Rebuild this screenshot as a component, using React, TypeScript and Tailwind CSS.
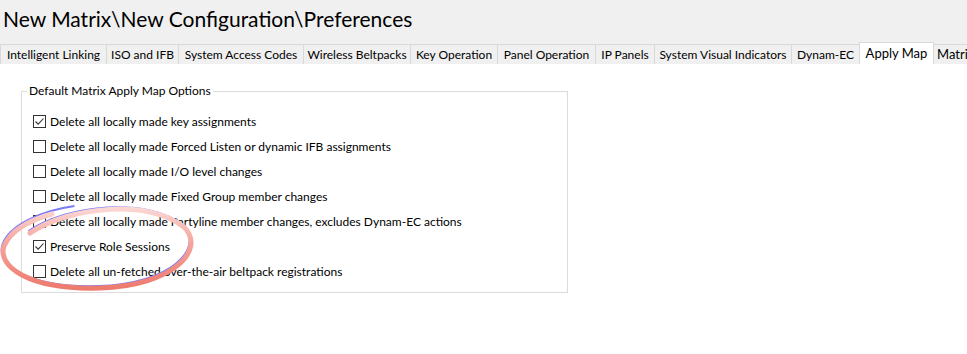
const tabs = [
  { label: "Intelligent Linking", w: "w-[107px]" },
  { label: "ISO and IFB", w: "w-[73px]" },
  { label: "System Access Codes", w: "w-[126px]" },
  { label: "Wireless Beltpacks", w: "w-[108px]" },
  { label: "Key Operation", w: "w-[88px]" },
  { label: "Panel Operation", w: "w-[99px]" },
  { label: "IP Panels", w: "w-[60px]" },
  { label: "System Visual Indicators", w: "w-[138px]" },
  { label: "Dynam-EC", w: "w-[69px]" },
];

const options = [
  { label: "Delete all locally made key assignments", checked: true },
  { label: "Delete all locally made Forced Listen or dynamic IFB assignments", checked: false },
  { label: "Delete all locally made I/O level changes", checked: false },
  { label: "Delete all locally made Fixed Group member changes", checked: false },
  { label: "Delete all locally made Partyline member changes, excludes Dynam-EC actions", checked: false },
  { label: "Preserve Role Sessions", checked: true },
  { label: "Delete all un-fetched over-the-air beltpack registrations", checked: false },
];

function CheckBox({ checked }: { checked: boolean }) {
  return (
    <span className="flex h-[13px] w-[13px] shrink-0 items-center justify-center border border-[#333333] bg-white">
      {checked && (
        <svg width="11" height="11" viewBox="0 0 11 11">
          <path d="M1.5 5.5 L4.2 8.2 L9.5 2.5" fill="none" stroke="#333" strokeWidth="1.1" />
        </svg>
      )}
    </span>
  );
}

// hand-drawn annotation ring around "Preserve Role Sessions"
function Highlight() {
  return (
    <svg
      className="pointer-events-none absolute left-0 top-[200px]"
      width="205"
      height="95"
      viewBox="0 0 205 95"
    >
      <defs>
        <linearGradient id="pink" x1="0" y1="0" x2="0" y2="1">
          <stop offset="0" stopColor="#fbd6d2" />
          <stop offset="0.45" stopColor="#f5a39b" />
          <stop offset="1" stopColor="#ee7a6e" />
        </linearGradient>
      </defs>
      <path
        d="M30 33 C 70 6, 150 -1, 184 27 C 207 50, 172 86, 100 88 C 28 90, -3 66, 4 46 C 11 28, 40 13, 76 8"
        fill="none"
        stroke="#7b7bf6"
        strokeWidth="1.8"
        transform="translate(-1.5 -2)"
      />
      <path
        d="M30 33 C 70 6, 150 -1, 184 27 C 207 50, 172 86, 100 88 C 28 90, -3 66, 4 46 C 11 30, 30 20, 52 14"
        fill="none"
        stroke="url(#pink)"
        strokeWidth="5"
        strokeLinecap="round"
      />
    </svg>
  );
}

export default function App() {
  return (
    <div
      className="relative h-[354px] w-[967px] overflow-hidden bg-white text-[12px] text-black"
      style={{ fontFamily: "Lato, 'Liberation Sans', sans-serif" }}
    >
      <div className="h-[64px] bg-[#f0f0f0]">
        <div className="h-[42px] whitespace-nowrap pl-[3px] pt-[6px] text-[21px] leading-[26px]">
          New Matrix\New Configuration\Preferences
        </div>
        <div className="flex h-[22px] items-end overflow-hidden whitespace-nowrap pl-px">
          {tabs.map((t) => (
            <div
              key={t.label}
              className={`-ml-px flex h-[20px] shrink-0 items-center justify-center border border-b-0 border-[#d9d9d9] bg-[#f0f0f0] ${t.w}`}
            >
              {t.label}
            </div>
          ))}
          <div className="-ml-px flex h-[22px] w-[75px] shrink-0 items-center justify-center border border-b-0 border-[#d9d9d9] bg-white text-[13px]">
            Apply Map
          </div>
          <div className="-ml-px flex h-[20px] w-[80px] shrink-0 items-center border border-b-0 border-[#d9d9d9] bg-[#f0f0f0] pl-[3px] text-[13px]">
            Matrix Options
          </div>
        </div>
      </div>

      <div className="pl-[21px] pt-[20px]">
        <fieldset className="h-[209px] w-[547px] border border-[#dcdcdc] px-[11px] pt-[11px]">
          <legend className="-ml-[6px] px-[2px] leading-[14px]">Default Matrix Apply Map Options</legend>
          <div className="flex flex-col">
            {options.map((o) => (
              <label key={o.label} className="flex h-[25px] items-center gap-[4px]">
                <CheckBox checked={o.checked} />
                <span>{o.label}</span>
              </label>
            ))}
          </div>
        </fieldset>
      </div>

      <Highlight />
    </div>
  );
}
